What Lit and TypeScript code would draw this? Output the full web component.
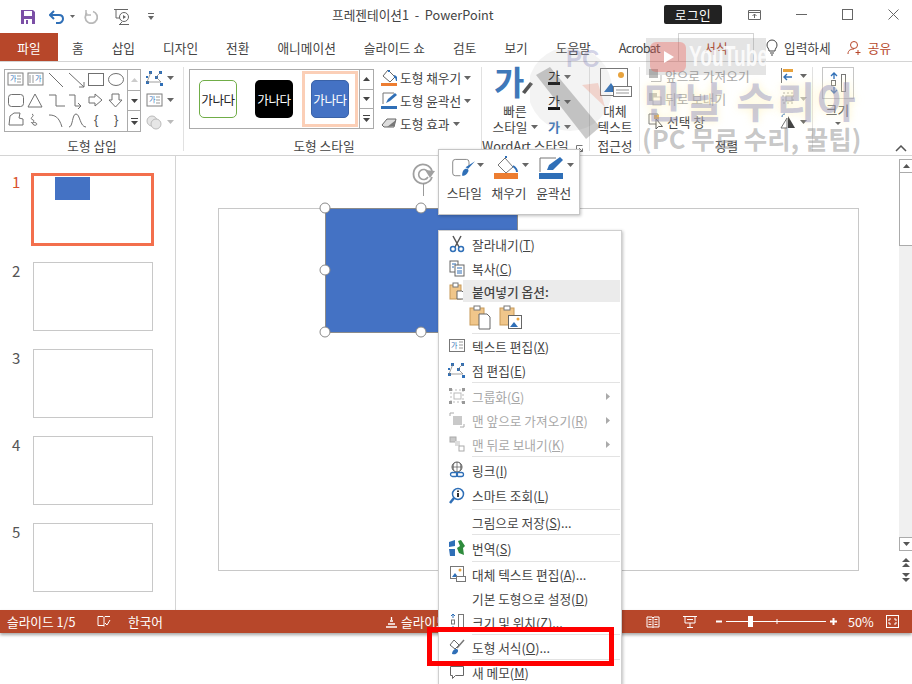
import { LitElement, html, css, svg } from "lit";
import { customElement } from "lit/decorators.js";

const caret = (c = "#666") => html`<svg class="caret" width="7" height="4" viewBox="0 0 7 4"><path d="M0 0h7L3.500 4z" fill="${c}"/></svg>`;
const ga = (x: number, y: number, w = 15, h = 12, vertical = false) => svg`
  <rect x="${x}" y="${y}" width="${w}" height="${h}" fill="#fff" stroke="#7f7f7f"/>
  <text x="${vertical ? x + 7 : x + 2}" y="${y + 8}" font-size="7" fill="#2f6fb7" stroke="none" font-family="Noto Sans CJK KR">가</text>
  ${vertical ? svg`<path d="M${x + 2} ${y + 2}v8M${x + 5} ${y + 2}v8" stroke="#999"/>` : svg`<path d="M${x + 9} ${y + 3}h4M${x + 9} ${y + 6}h4M${x + 9} ${y + 9}h4" stroke="#999"/>`}`;

const galleryShapes = svg`<svg width="122" height="60" viewBox="0 0 122 60" fill="none" stroke="#707070" stroke-width="1">
  ${ga(3, 3)}${ga(23, 3, 15, 12, true)}
  <path d="M44 3l14 14M64 3l15 14M79 17v-5M79 17h-5"/>
  <rect x="83.500" y="3.500" width="15" height="12"/><ellipse cx="111" cy="9.500" rx="7.500" ry="6"/>
  <rect x="3.500" y="24.500" width="15" height="12" rx="3"/><path d="M30 24l7 13H23z"/>
  <path d="M44 25h7v11h9M64 25h6v11h6M76 36l-3-3M76 36l-3 3"/><path d="M84 27h6v-3l7 6-7 6v-3h-6z"/><path d="M107 24h7v6h3l-6.500 7-6.500-7h3z"/>
  <path d="M5 46l4-3h6l-1 5 4 1v6H4zM27 44c4 2-4 4 1 6 3 1-3 3 1 5 2 1 4-1 2-2-3-2-3 2-5-1M44 45c6 0 10 2 13 12M64 57c4 0 3-13 7-13s4 13 10 13" />
  <text x="89" y="54" font-size="13" fill="#555" stroke="none" font-family="Liberation Sans">{</text><text x="109" y="54" font-size="13" fill="#555" stroke="none" font-family="Liberation Sans">}</text>
</svg>`;

const nodes = (x: number, y: number) => svg`<g fill="#2f6fb7"><rect x="${x + 3}" y="${y}" width="3" height="3"/><rect x="${x + 13}" y="${y}" width="3" height="3"/><rect x="${x}" y="${y + 10}" width="3" height="3"/><rect x="${x + 14}" y="${y + 12}" width="3" height="3"/><rect x="${x}" y="${y + 5}" width="2" height="2"/><rect x="${x + 9}" y="${y + 5}" width="3" height="3"/></g><path d="M${x + 5} ${y + 1}l-4 10h14l-5-5 5-5" fill="none" stroke="#777" stroke-width=".7"/>`;

const fillIco = svg`<path d="M7 1l7 7-5 5-7-6z" fill="#fff" stroke="#666"/><path d="M8 3V1M13 7c3 1 3 3 3 5" stroke="#2f6fb7" stroke-width="2" fill="none"/><rect x="0" y="14" width="16" height="3" fill="#ed7d31"/>`;
const lineIco = svg`<path d="M2 12V1h11" fill="none" stroke="#777"/><path d="M5 11l2-4 7-6 2 2-7 6z" fill="#2f6fb7"/><rect x="0" y="14" width="16" height="3" fill="#2f6fb7"/>`;
const clip = (x: number) => svg`<rect x="${x}" y="3" width="14" height="17" fill="#f0c68a" stroke="#c89a58"/><rect x="${x + 4}" y="1" width="6" height="4" fill="#fff" stroke="#777"/>`;

type Row = { t?: any; ic?: any; dis?: boolean; sub?: boolean; split?: boolean; sep?: boolean; gap?: boolean; cls?: string; h?: number };
const s = (...p: any[]) => html`<svg width="18" height="18" viewBox="0 0 18 18">${p}</svg>`;
const icons = {
  cut: s(svg`<path d="M5 1l6 11M13 1L7 12" stroke="#555" stroke-width="1.500" fill="none"/><circle cx="5" cy="14" r="2.500" fill="none" stroke="#2f6fb7" stroke-width="1.500"/><circle cx="13" cy="14" r="2.500" fill="none" stroke="#2f6fb7" stroke-width="1.500"/>`),
  copy: s(svg`<rect x="2" y="2" width="8" height="11" fill="#fff" stroke="#666"/><rect x="7" y="6" width="9" height="11" fill="#fff" stroke="#666"/><path d="M4 5h4M4 8h2M9 9h5M9 12h5M9 14h5" stroke="#2f6fb7"/>`),
  paste: s(svg`<rect x="2" y="3" width="11" height="14" fill="#f0c68a" stroke="#c89a58"/><rect x="5" y="1" width="5" height="4" fill="#fff" stroke="#777"/><path d="M9 9h5l2 2v6H9z" fill="#fff" stroke="#666"/>`),
  text: s(svg`<rect x="1.500" y="2.500" width="15" height="12" fill="#fff" stroke="#777"/><text x="3" y="11" font-size="7" fill="#2f6fb7" font-family="Noto Sans CJK KR">가</text><path d="M11 5h4M11 8h4M11 11h4" stroke="#999"/>`),
  point: s(nodes(0, 2)),
  group: s(svg`<path d="M3 3h12v12H3z" fill="none" stroke="#bbb" stroke-dasharray="2 2"/><rect x="1" y="1" width="3" height="3" fill="#999"/><rect x="14" y="1" width="3" height="3" fill="#999"/><rect x="1" y="14" width="3" height="3" fill="#999"/><rect x="14" y="14" width="3" height="3" fill="#999"/><rect x="6" y="6" width="7" height="6" fill="none" stroke="#bbb"/>`),
  front: s(svg`<path d="M2 5V2h4M16 13v3h-4" fill="none" stroke="#aaa"/><rect x="5" y="5" width="9" height="9" fill="#c9c9c9"/>`),
  back: s(svg`<rect x="2" y="2" width="6" height="5" fill="#c9c9c9" stroke="#aaa"/><rect x="7" y="6" width="5" height="5" fill="#ddd"/><rect x="11" y="11" width="5" height="5" fill="#fff" stroke="#aaa"/>`),
  link: s(svg`<circle cx="9" cy="6" r="5" fill="none" stroke="#555"/><path d="M4 6h10M9 1v10M6 2c-1 3-1 5 0 8M12 2c1 3 1 5 0 8" stroke="#555" fill="none" stroke-width=".7"/><rect x="2.500" y="11.500" width="7" height="4" rx="2" fill="#fff" stroke="#2f6fb7" stroke-width="1.300"/><rect x="8.500" y="11.500" width="7" height="4" rx="2" fill="none" stroke="#2f6fb7" stroke-width="1.300"/>`),
  smart: s(svg`<circle cx="10" cy="7" r="5.500" fill="#fff" stroke="#2f6fb7" stroke-width="1.500"/><path d="M6 11l-4 5" stroke="#2f6fb7" stroke-width="2.500"/><rect x="9" y="6" width="2" height="4" fill="#333"/><rect x="9" y="3.500" width="2" height="1.500" fill="#333"/>`),
  trans: s(svg`<path d="M1 3l6-2v6l-6 1zM1 10h6v7H2z" fill="#2f6fb7"/><path d="M10 2l3-1 4 6-2 2 1 7-5-2-2-5 3-2z" fill="#2e8b3c"/>`),
  alt: s(svg`<rect x="2.500" y="1.500" width="13" height="12" fill="#fff" stroke="#777"/><path d="M4 12l3-4 3 4z" fill="#2f6fb7"/><circle cx="12" cy="5" r="1.500" fill="#e8a33d"/><rect x="8.500" y="11.500" width="9" height="5" fill="#fff" stroke="#777"/>`),
  size: s(svg`<path d="M5 1v4M3 3l2-2 2 2M5 17v-4M3 15l2 2 2-2" stroke="#2f6fb7" fill="none"/><rect x="3.500" y="7" width="3" height="4" fill="none" stroke="#777"/><rect x="10.500" y="1.500" width="5" height="15" fill="#fff" stroke="#777"/>`),
  fmt: s(svg`<path d="M2 7l4-5 5 5-4 4z" fill="#fff" stroke="#666"/><path d="M16 2l-7 8" stroke="#777" stroke-width="1.500"/><path d="M4 16c0-3 2-5 4-5s3 2 1 4-3 1-5 1z" fill="#2f6fb7"/>`),
  memo: s(svg`<path d="M2.500 3.500h13v9h-8l-3 3v-3h-2z" fill="#fff" stroke="#666"/>`),
};

const rows: Row[] = [
  { ic: icons.cut, t: html`잘라내기(<u>T</u>)` },
  { ic: icons.copy, t: html`복사(<u>C</u>)` },
  { ic: icons.paste, t: html`<b>붙여넣기 옵션:</b>`, cls: "hd", h: 22 },
  { cls: "pastes", h: 31 },
  { sep: true },
  { ic: icons.text, t: html`텍스트 편집(<u>X</u>)` },
  { ic: icons.point, t: html`점 편집(<u>E</u>)` },
  { sep: true, gap: true },
  { ic: icons.group, t: html`그룹화(<u>G</u>)`, dis: true, sub: true },
  { ic: icons.front, t: html`맨 앞으로 가져오기(<u>R</u>)`, dis: true, sub: true, split: true },
  { ic: icons.back, t: html`맨 뒤로 보내기(<u>K</u>)`, dis: true, sub: true, split: true },
  { sep: true, gap: true },
  { ic: icons.link, t: html`링크(<u>I</u>)` },
  { ic: icons.smart, t: html`스마트 조회(<u>L</u>)`, h: 27 },
  { sep: true },
  { t: html`그림으로 저장(<u>S</u>)...` },
  { sep: true },
  { ic: icons.trans, t: html`번역(<u>S</u>)`, h: 26 },
  { sep: true },
  { ic: icons.alt, t: html`대체 텍스트 편집(<u>A</u>)...` },
  { t: html`기본 도형으로 설정(<u>D</u>)` },
  { ic: icons.size, t: html`크기 및 위치(<u>Z</u>)...` },
  { sep: true },
  { ic: icons.fmt, t: html`도형 서식(<u>O</u>)...` },
  { sep: true },
  { ic: icons.memo, t: html`새 메모(<u>M</u>)` },
];

const upTri = (c = "#444") => html`<svg width="7" height="4" viewBox="0 0 7 4"><path d="M0 4h7L3.500 0z" fill="${c}"/></svg>`;
const dnTri = (c = "#444") => html`<svg width="7" height="4" viewBox="0 0 7 4"><path d="M0 0h7L3.500 4z" fill="${c}"/></svg>`;
const moreTri = html`<svg width="7" height="7" viewBox="0 0 7 7"><path d="M0 0h7v1H0zM0 3h7L3.500 7z" fill="#444"/></svg>`;

@customElement("app-root")
export class AppRoot extends LitElement {
  static styles = css`
    :host { display: block; position: relative; width: 912px; height: 684px; overflow: hidden; background: #fff; color: #444; font: 12.700px "Noto Sans CJK KR", "Noto Sans", sans-serif; }
    svg { display: block; flex: none; }
    .titlebar { height: 33px; display: grid; grid-template-columns: 332px auto 1fr; align-items: center; background: #fff; }
    .qat { display: flex; align-items: center; padding-left: 20px; height: 30px; }
    .qat .m1 { margin-left: 13px; } .qat .m2 { margin-left: 5px; } .qat .m3 { margin-left: 9px; } .qat .m4 { margin-left: 15px; }
    .title { white-space: nowrap; margin-top: -4px; }
    .winbtns { display: flex; align-items: center; justify-content: flex-end; height: 28px; margin-top: -4px; }
    .login { width: 58px; height: 19px; background: #222; color: #fff; border-radius: 2px; display: flex; align-items: center; justify-content: center; margin-right: 26px; letter-spacing: .5px; }
    .winbtns svg { margin-right: 35px; }
    .winbtns svg:last-child { margin-right: 13px; }
    .tabs { height: 29px; display: flex; align-items: stretch; border-bottom: 1px solid #d4d4d4; box-sizing: border-box; }
    .tabl { width: 678px; flex: none; display: flex; align-items: stretch; }
    .tab { padding: 0 14px; display: flex; align-items: center; white-space: nowrap; }
    .tab.file { width: 58px; box-sizing: border-box; padding: 0; justify-content: center; background: #b7472a; color: #fff; }
    .tab.lat { letter-spacing: -.7px; padding: 0 0 0 14px; }
    .tab.fmt { width: 76px; box-sizing: border-box; padding: 0; justify-content: center; color: #b7472a; border: 1px solid #d4d4d4; border-bottom: 0; }
    .tab.tell { padding: 0 0 0 11px; gap: 5px; }
    .tab.share { padding: 0; margin-left: 16px; gap: 5px; color: #b7472a; }
    .ribbon { height: 94px; display: flex; border-bottom: 1px solid #d4d4d4; box-sizing: border-box; position: relative; }
    .grp { display: grid; grid-template-rows: 76px 17px; box-sizing: border-box; position: relative; }
    .grp::after { content: ""; position: absolute; right: 0; top: 5px; bottom: 4px; width: 1px; background: #e1e1e1; }
    .body { display: flex; min-height: 0; }
    .lbl { text-align: center; line-height: 16px; position: relative; white-space: nowrap; }
    .g-ins { width: 184px; } .g-sty { width: 298px; } .g-wa { width: 108px; } .g-acc { width: 50px; } .g-arr { width: 173px; } .g-sz { width: 43px; }
    .g-sz::after { display: none; }
    .g-ins .body { padding: 7px 0 0 4px; gap: 5px; }
    .g-sty .body { padding: 7px 0 0 5px; gap: 7px; }
    .g-sty .lbl { padding-right: 18px; }
    .g-wa .body { padding: 4px 0 0 12px; gap: 12px; }
    .g-wa .lbl { padding-right: 22px; }
    .launcher { position: absolute; right: 8px; top: 7px; }
    .g-acc .body { padding: 6px 0 0; flex-direction: column; align-items: center; }
    .g-acc svg { margin-left: 2px; }
    .g-arr .body { padding: 2px 0 0 8px; }
    .g-sz .body { padding: 5px 0 0 6px; flex-direction: column; align-items: center; }
    .gal { display: flex; border: 1px solid #ababab; background: #fff; box-sizing: border-box; }
    .gal.shapes { width: 137px; height: 63px; }
    .gal.stylegal { width: 185px; height: 60px; }
    .bar { display: flex; flex-direction: column; width: 13px; border-left: 1px solid #ababab; flex: none; }
    .bar div { flex: 1; display: flex; align-items: center; justify-content: center; border-bottom: 1px solid #ababab; }
    .bar div:last-child { border-bottom: 0; }
    .col { display: flex; flex-direction: column; }
    .tools { gap: 6px; padding-top: 1px; }
    .sty3 { margin-top: -3px; height: 72px; }
    .mini { display: flex; align-items: center; gap: 4px; }
    .mini.tall { height: 23px; }
    .wa-col { gap: 2px; }
    .wa1 { border-bottom: 3px solid #000; line-height: 13px; font-size: 13px; color: #222; }
    .wa2 { color: #3f78b9; line-height: 13px; font-size: 13px; font-weight: 700; }
    .quick { align-items: center; width: 42px; }
    .big { text-align: center; line-height: 16px; white-space: nowrap; }
    .quick .big { margin-top: 1px; display: flex; flex-direction: column; align-items: center; }
    .quick .big span { display: flex; align-items: center; gap: 3px; }
    .g-acc .big { margin-top: 3px; }
    .thumb { width: 38px; height: 38px; border-radius: 5px; box-sizing: border-box; display: flex; align-items: center; justify-content: center; font-size: 12.500px; white-space: nowrap; letter-spacing: -.3px; }
    .thumb.t1 { border: 1.500px solid #70ad47; color: #222; }
    .thumb.t2 { background: #000; color: #fff; }
    .thumb.t3 { background: #4472c4; color: #fff; border: 1px solid #3a62a8; }
    .styles { display: flex; align-items: center; width: 170px; padding-left: 9px; gap: 18px; box-sizing: border-box; }
    .hl { width: 56px; height: 56px; border: 3px solid #fbcfb7; box-sizing: border-box; display: flex; align-items: center; justify-content: center; margin: 0 -9px; }
    .line { display: flex; align-items: center; gap: 3px; height: 23px; white-space: nowrap; }
    .arr-txt { width: 112px; color: #a9a9a9; }
    .line.on { color: #444; }
    .arr-ic { margin-left: 20px; width: 30px; }
    .szbox { width: 30px; height: 30px; border: 1px solid #c6c6c6; display: flex; align-items: center; justify-content: center; flex: none; }
    .g-sz .big { margin-top: 3px; }
    .g-sz .dn { margin-top: 4px; }
    .chev { position: absolute; left: 895px; top: 83px; }
    .status { height: 23px; background: #b7472a; color: #fff; display: flex; align-items: center; box-shadow: 0 2px 3px rgba(0,0,0,.35); position: relative; }
    .status span { white-space: nowrap; }
    .st1 { margin-left: 7px; width: 90px; }
    .st2 { margin-left: 17px; width: 257px; }
    .st3 { margin-left: 3px; width: 245px; }
    .st4 { margin-left: 23px; }
    .st5 { margin-left: 17px; }
    .st6 { margin-left: 10px; width: 38px; }
    .main { height: 454px; display: flex; }
    .thumbs { width: 176px; box-sizing: border-box; border-right: 1px solid #d4d4d4; padding: 17px 0 0 12px; display: flex; flex-direction: column; gap: 18px; flex: none; }
    .t { display: flex; gap: 11px; height: 69px; font-size: 15px; line-height: 13px; color: #555; padding-top: 2px; box-sizing: border-box; }
    .t i { display: block; width: 120px; height: 69px; border: 1px solid #c8c8c8; box-sizing: border-box; margin: -2px 0 0 2px; background: #fff; flex: none; }
    .t.on { height: 71px; color: #d9512c; }
    .t.on i { width: 123px; height: 73px; border: 3px solid #f36f4d; margin: -2px 0 0; padding: 1px 0 0 21px; }
    .t.on i b { display: block; width: 35px; height: 23px; background: #4472c4; }
    .canvas { flex: 1; padding: 52px 40px 0 42px; box-sizing: border-box; position: relative; background: #fff; }
    .slide { width: 641px; height: 363px; border: 1px solid #c8c8c8; box-sizing: border-box; background: #fff; }
    .vs { width: 13px; flex: none; padding-top: 3px; box-sizing: border-box; display: flex; flex-direction: column; background: #fff; }
    .vs .up, .vs .dn { height: 14px; box-sizing: border-box; border: 1px solid #ababab; display: flex; align-items: center; justify-content: center; flex: none; border-right: 0; }
    .vs .th { height: 73px; border: 1px solid #ababab; border-top: 0; border-right: 0; box-sizing: border-box; flex: none; }
    .vs .tr { height: 291px; background: #f0f0f0; flex: none; }
    .vs .nav { height: 15px; display: flex; align-items: center; justify-content: center; flex: none; }
    .vs .nav1 { margin-top: 4px; }
    .shape { position: absolute; left: 149px; top: 52px; width: 193px; height: 125px; background: #4472c4; border: 1px solid #8b8b8b; box-sizing: border-box; }
    .h { position: absolute; width: 11px; height: 11px; box-sizing: border-box; border: 1.500px solid #8a8a8a; border-radius: 50%; background: #fff; transform: translate(-50%, -50%); }
    .rot { position: absolute; left: 236px; top: 6px; }
    .pop { position: absolute; left: 438px; top: 149px; width: 142px; height: 66px; box-sizing: border-box; background: #fff; border: 1px solid #c6c6c6; box-shadow: 1px 1px 3px rgba(0,0,0,.25); display: grid; grid-template-columns: repeat(3, 1fr); padding: 6px 3px 0; text-align: center; }
    .pop .pi { display: flex; flex-direction: column; align-items: center; gap: 3px; white-space: nowrap; }
    .pop .ir { display: flex; align-items: flex-start; gap: 2px; height: 24px; padding-left: 6px; }
    .pop .ir .caret { margin-top: 7px; }
    .menu { position: absolute; left: 438px; top: 230px; width: 184px; box-sizing: border-box; background: #fff; border: 1px solid #cfcfcf; box-shadow: 1px 1px 3px rgba(0,0,0,.25); padding: 1px 1px 0 0; }
    .row { display: grid; grid-template-columns: 33px 1fr 22px; align-items: center; height: 24px; white-space: nowrap; }
    .row .ic { display: flex; justify-content: center; padding-left: 2px; }
    .row .tx { grid-column: 2; }
    .row .tx u { text-underline-offset: 1px; }
    .row.dis { color: #a8a8a8; }
    .row .ar { display: flex; align-items: center; justify-content: flex-end; gap: 5px; grid-column: 3; }
    .row .ar svg { margin-right: 10px; }
    .row .ar i { display: block; width: 1px; height: 12px; background: #d6d6d6; margin-right: 3px; }
    .row.hd .tx { background: #ebebeb; height: 100%; display: flex; align-items: center; padding-left: 9px; margin-left: -9px; grid-column: 2 / 4; }
    .row.hd .tx b { color: #444; font-weight: 500; }
    .row.pastes { padding-left: 30px; display: flex; gap: 6px; }
    .sep { height: 1px; background: #e3e3e3; margin-left: 33px; }
    .sep.gap { margin-bottom: 1px; }
    .red { position: absolute; left: 427px; top: 627px; width: 187px; height: 39px; box-sizing: border-box; border: 5px solid #ff0000; }
    .wm { position: absolute; left: 530px; top: 35px; width: 340px; height: 125px; pointer-events: none; }
    .wm .big1 { position: absolute; left: 114px; top: 40px; font-size: 42px; line-height: 50px; font-weight: 700; color: rgba(130,130,185,.42); white-space: nowrap; letter-spacing: 1.800px; text-shadow: 0 0 8px rgba(255,240,170,.6); }
    .wm .big2 { position: absolute; left: 112px; top: 88px; font-size: 25.500px; line-height: 30px; font-weight: 700; color: rgba(130,130,130,.45); white-space: nowrap; }
    .wm .yt { position: absolute; left: 116px; top: 3px; width: 120px; height: 37px; background: rgba(120,120,120,.2); display: flex; align-items: center; gap: 3px; padding-left: 4px; box-sizing: border-box; color: rgba(255,255,255,.85); font: 700 29px "Liberation Sans", sans-serif; overflow: hidden; white-space: nowrap; }
    .wm .yt span { display: block; transform: scaleX(.66); transform-origin: left center; }
    .wm .circ { position: absolute; left: 0; top: 2px; }
  `;

  private renderTitle() {
    return html`<div class="titlebar">
      <div class="qat">
        <svg width="16" height="16" viewBox="0 0 16 16"><path d="M1 1h12l2 2v12H1z" fill="#7b4fa6"/><rect x="4" y="2" width="8" height="5" fill="#fff"/><rect x="4" y="10" width="8" height="5" fill="#fff"/><rect x="6" y="11" width="2" height="4" fill="#7b4fa6"/></svg>
        <svg class="m1" width="16" height="14" viewBox="0 0 16 14" fill="none"><path d="M5 1L1 5l4 4M1 5h9c3 0 4 2 4 4s-2 4-4 4H7" stroke="#2f6fb7" stroke-width="2"/></svg>
        <svg class="m2" width="5" height="3" viewBox="0 0 5 3"><path d="M0 0h5L2.500 3z" fill="#666"/></svg>
        <svg class="m3" width="14" height="14" viewBox="0 0 14 14" fill="none"><path d="M9 1.500A6 6 0 1 1 3 3" stroke="#b8b8b8" stroke-width="1.800"/><path d="M2 0v5h5" stroke="#b8b8b8" stroke-width="1.500"/></svg>
        <svg class="m4" width="20" height="18" viewBox="0 0 20 18" fill="none"><path d="M1 1.500h14M3 2v8h4" stroke="#666"/><circle cx="11" cy="9" r="4.500" stroke="#666"/><path d="M10 7l3 2-3 2z" fill="#666"/><path d="M6 16.500h10M9 14l-2 2" stroke="#666"/></svg>
        <svg class="m4" width="6" height="7" viewBox="0 0 6 7"><path d="M0 0h6v1H0zM0 3h6L3 7z" fill="#666"/></svg>
      </div>
      <div class="title">프레젠테이션1&nbsp; - &nbsp;PowerPoint</div>
      <div class="winbtns">
        <div class="login">로그인</div>
        <svg width="13" height="10" viewBox="0 0 13 10" fill="none"><path d="M.5.500h12v9H.5zM.5 2.500h12M6.500 8V4M4.500 6l2-2 2 2" stroke="#666"/></svg>
        <svg width="11" height="11" viewBox="0 0 11 11"><path d="M0 5.500h11" stroke="#666"/></svg>
        <svg width="11" height="11" viewBox="0 0 11 11"><rect x=".5" y=".5" width="10" height="10" fill="none" stroke="#666"/></svg>
        <svg width="11" height="11" viewBox="0 0 11 11"><path d="M.5.500l10 10M10.500.500l-10 10" stroke="#666"/></svg>
      </div>
    </div>`;
  }

  private renderTabs() {
    return html`<div class="tabs">
      <div class="tabl">
        <div class="tab file">파일</div>
        ${["홈", "삽입", "디자인", "전환", "애니메이션", "슬라이드 쇼", "검토", "보기", "도움말"].map((t) => html`<div class="tab">${t}</div>`)}
        <div class="tab lat">Acrobat</div>
      </div>
      <div class="tab fmt">서식</div>
      <div class="tab tell"><svg width="14" height="17" viewBox="0 0 14 17" fill="none"><path d="M4 12c0-3-2-3-2-6a5 5 0 0 1 10 0c0 3-2 3-2 6zM5 14h4M6 16h2" stroke="#444"/></svg>입력하세</div>
      <div class="tab share"><svg width="16" height="15" viewBox="0 0 16 15" fill="none"><circle cx="7" cy="5" r="3.500" stroke="#b7472a"/><path d="M1 14c0-4 3-5 6-5M11 10v5M8.500 12.500h5" stroke="#b7472a"/></svg>공유</div>
    </div>`;
  }

  private renderRibbon() {
    return html`<div class="ribbon">
      <div class="grp g-ins">
        <div class="body">
          <div class="gal shapes">
            ${galleryShapes}
            <div class="bar"><div>${upTri("#ccc")}</div><div>${dnTri()}</div><div>${moreTri}</div></div>
          </div>
          <div class="col tools">
            <div class="mini"><svg width="17" height="16" viewBox="0 0 17 16">${nodes(0, 1)}</svg>${caret()}</div>
            <div class="mini"><svg width="17" height="16" viewBox="0 0 17 16">${ga(1, 2)}</svg>${caret()}</div>
            <div class="mini"><svg width="17" height="16" viewBox="0 0 17 16" fill="#e6e6e6" stroke="#bbb"><circle cx="6" cy="7" r="5"/><circle cx="10" cy="10" r="5"/></svg>${caret("#bbb")}</div>
          </div>
        </div>
        <div class="lbl">도형 삽입</div>
      </div>
      <div class="grp g-sty">
        <div class="body">
          <div class="gal stylegal">
            <div class="styles">
              <div class="thumb t1">가나다</div>
              <div class="thumb t2">가나다</div>
              <div class="hl"><div class="thumb t3">가나다</div></div>
            </div>
            <div class="bar"><div>${upTri()}</div><div>${dnTri()}</div><div>${moreTri}</div></div>
          </div>
          <div class="col sty3">
            <div class="line"><svg width="16" height="17" viewBox="0 0 16 17">${fillIco}</svg>도형 채우기 ${caret()}</div>
            <div class="line"><svg width="16" height="17" viewBox="0 0 16 17">${lineIco}</svg>도형 윤곽선 ${caret()}</div>
            <div class="line"><svg width="16" height="17" viewBox="0 0 16 17"><path d="M1 10l5-6h9l-2 8H3z" fill="#ddd" stroke="#666"/><path d="M6 12l7-1 2-6" fill="#777"/></svg>도형 효과 ${caret()}</div>
          </div>
        </div>
        <div class="lbl">도형 스타일</div>
      </div>
      <div class="grp g-wa">
        <div class="body">
          <div class="col quick">
            <svg width="40" height="36" viewBox="0 0 40 36"><text x="-1" y="29" font-size="33" font-weight="700" fill="#3f78b9" font-family="Noto Sans CJK KR">가</text><path d="M27 26l8-10 3 2-8 10z" fill="#555"/></svg>
            <div class="big"><div>빠른</div><span>스타일${caret()}</span></div>
          </div>
          <div class="col wa-col">
            <div class="mini tall"><span class="wa1">가</span>${caret()}</div>
            <div class="mini tall"><span class="wa1">가</span>${caret()}</div>
            <div class="mini tall"><span class="wa2">가</span>${caret()}</div>
          </div>
        </div>
        <div class="lbl">WordArt 스타일<svg class="launcher" width="7" height="7" viewBox="0 0 7 7" fill="none"><path d="M.5 6.500V.5h6M3 3l3.500 3.500M6.500 3.500v3h-3" stroke="#777"/></svg></div>
      </div>
      <div class="grp g-acc">
        <div class="body">
          <svg width="32" height="32" viewBox="0 0 32 32"><rect x=".5" y=".5" width="27" height="27" fill="#fff" stroke="#777"/><circle cx="21" cy="7" r="3" fill="#e8a33d"/><path d="M4 24l7-9 6 9zM14 24l5-5 4 5z" fill="#2f6fb7"/><rect x="13.500" y="18.500" width="18" height="10" fill="#fff" stroke="#777"/><path d="M16 22h13M16 25h13" stroke="#999"/></svg>
          <div class="big">대체<br>텍스트</div>
        </div>
        <div class="lbl">접근성</div>
      </div>
      <div class="grp g-arr">
        <div class="body">
          <div class="col arr-txt">
            <div class="line"><svg width="14" height="15" viewBox="0 0 14 15"><rect x="1" y="1" width="9" height="9" fill="#bbb"/><path d="M3 13.500h10V7" fill="none" stroke="#bbb"/></svg>앞으로 가져오기</div>
            <div class="line"><svg width="14" height="15" viewBox="0 0 14 15"><rect x="1" y="2" width="8" height="8" fill="#bbb"/><rect x="5" y="6" width="8" height="8" fill="#fff" stroke="#bbb"/></svg>뒤로 보내기</div>
            <div class="line on"><svg width="16" height="17" viewBox="0 0 16 17"><path d="M1 1h9v10H1z" fill="none" stroke="#777"/><rect x="6" y="2" width="5" height="4" fill="#e8a33d"/><path d="M8 6v10l2.500-2.500h4z" fill="#fff" stroke="#555"/></svg>선택 창</div>
          </div>
          <div class="col arr-ic">
            <div class="mini tall"><svg width="16" height="17" viewBox="0 0 16 17"><path d="M1.500 1v15" stroke="#777"/><rect x="3" y="2" width="10" height="3" fill="#e8a33d"/><path d="M12 10H4M7 7l-3 3 3 3" stroke="#2f6fb7" fill="none" stroke-width="1.400"/></svg>${caret()}</div>
            <div class="mini tall"><svg width="16" height="17" viewBox="0 0 16 17"><path d="M3 3h10v10H3z" fill="none" stroke="#aaa" stroke-dasharray="2 2"/><rect x="6" y="6" width="6" height="5" fill="none" stroke="#aaa"/></svg>${caret("#aaa")}</div>
            <div class="mini tall"><svg width="16" height="17" viewBox="0 0 16 17"><path d="M8 3l7 12H8z" fill="#444"/><path d="M7 5L1 15h6z" fill="#fff" stroke="#777"/><path d="M5 1c-2 0-3 1-3 3" stroke="#2f6fb7" fill="none"/></svg>${caret()}</div>
          </div>
        </div>
        <div class="lbl">정렬</div>
      </div>
      <div class="grp g-sz">
        <div class="body">
          <div class="szbox"><svg width="20" height="22" viewBox="0 0 20 22" fill="none"><path d="M6 1v6M3 4l3-3 3 3M6 21v-6M3 18l3 3 3-3" stroke="#2f6fb7" stroke-width="1.300"/><rect x="3.500" y="8.500" width="4" height="5" stroke="#777"/><rect x="13.500" y="2.500" width="4" height="17" stroke="#777"/></svg></div>
          <div class="big">크기</div>
          <svg class="dn" width="6" height="3" viewBox="0 0 6 3"><path d="M0 0h6L3 3z" fill="#666"/></svg>
        </div>
        <div class="lbl"></div>
      </div>
      <svg class="chev" width="12" height="7" viewBox="0 0 12 7" fill="none"><path d="M1 6l5-5 5 5" stroke="#555" stroke-width="1.500"/></svg>
    </div>`;
  }

  private renderMain() {
    return html`<div class="main">
      <div class="thumbs">
        <div class="t on">1<i><b></b></i></div>
        ${[2, 3, 4, 5].map((n) => html`<div class="t">${n}<i></i></div>`)}
      </div>
      <div class="canvas">
        <div class="slide"></div>
        <div class="shape"></div>
        <svg class="rot" width="24" height="34" viewBox="0 0 24 34" fill="none"><path d="M20 9A9.500 9.500 0 1 0 20 15" stroke="#a0a0a0" stroke-width="1.800"/><path d="M16 10a5 5 0 1 0 0 5" stroke="#a0a0a0" stroke-width="1.600"/><path d="M13 8l10 1-5 7z" fill="#a0a0a0"/><path d="M11.500 21v13" stroke="#9a9a9a"/></svg>
        ${[[149, 52], [245, 52], [149, 114], [149, 176], [245, 176]].map(([x, y]) => html`<div class="h" style="left:${x}px;top:${y}px"></div>`)}
      </div>
      <div class="vs">
        <div class="up">${upTri("#555")}</div>
        <div class="th"></div>
        <div class="tr"></div>
        <div class="dn">${dnTri("#555")}</div>
        <div class="nav nav1"><svg width="8" height="9" viewBox="0 0 8 9"><path d="M0 4h8L4 0zM0 9h8L4 5z" fill="#555"/></svg></div>
        <div class="nav"><svg width="8" height="9" viewBox="0 0 8 9"><path d="M0 0h8L4 4zM0 5h8L4 9z" fill="#555"/></svg></div>
      </div>
    </div>`;
  }

  private renderStatus() {
    return html`<div class="status">
      <span class="st1">슬라이드 1/5</span>
      <svg width="14" height="13" viewBox="0 0 14 13" fill="none"><path d="M1 1.500h5l1 1 1-1h5M1 1.500v9h6v1M7 2.500v8" stroke="#fff"/><path d="M8 8l2 2 3-5" stroke="#fff"/></svg>
      <span class="st2">한국어</span>
      <svg width="13" height="12" viewBox="0 0 13 12" fill="none"><path d="M1 11h11M3 8h7M5 5h3M6.500 1v3" stroke="#fff" stroke-width="1.300"/></svg>
      <span class="st3">슬라이드 노트</span>
      <svg width="14" height="12" viewBox="0 0 14 12" fill="none"><path d="M1 1h5l1 1 1-1h5v10H8l-1 .5L6 11H1zM7 2v9M2.500 3.500h3M2.500 6h3M2.500 8.500h3M8.500 3.500h3M8.500 6h3M8.500 8.500h3" stroke="#fff"/></svg>
      <svg class="st4" width="14" height="13" viewBox="0 0 14 13" fill="none"><path d="M0 1.500h14M2 2v6h10V2M7 8v4M4 12.500h6M4 4.500h6" stroke="#fff"/></svg>
      <svg class="st5" width="124" height="11" viewBox="0 0 124 11"><rect x="2" y="4.500" width="6" height="2" fill="#fff"/><path d="M12 5.500h100M63 3v5" stroke="#fff"/><rect x="34" y="0" width="5" height="11" fill="#fff"/><path d="M116 5.500h7M119.500 2v7" stroke="#fff" stroke-width="2"/></svg>
      <span class="st6">50%</span>
      <svg width="13" height="13" viewBox="0 0 13 13" fill="none"><rect x=".5" y=".5" width="12" height="12" stroke="#fff"/><path d="M4 3v2H2M9 3v2h2M4 10V8H2M9 10V8h2" stroke="#fff"/></svg>
    </div>`;
  }

  private renderPopup() {
    return html`<div class="pop">
      <div class="pi"><div class="ir"><svg width="24" height="24" viewBox="0 0 28 24" fill="none"><path d="M11 21H5a3 3 0 0 1-3-3V5a3 3 0 0 1 3-3h13a3 3 0 0 1 3 3v5" stroke="#777"/><path d="M28 4l-8 9-3-2zM13 21c0-5 2-8 5-8s3 3 1 5-3 3-6 3z" fill="#2f6fb7"/></svg>${caret()}</div>스타일</div>
      <div class="pi"><div class="ir"><svg width="26" height="24" viewBox="0 0 26 24" fill="none"><path d="M11 2l8 9-7 6-8-8z" fill="#fff" stroke="#777"/><path d="M12 2V0M19 10c3 2 4 3 4 6" stroke="#2f6fb7" stroke-width="2"/><rect x="0" y="17" width="24" height="6" fill="#ed7d31"/></svg>${caret()}</div>채우기</div>
      <div class="pi"><div class="ir"><svg width="26" height="24" viewBox="0 0 26 24" fill="none"><path d="M1 16V2h16" stroke="#777"/><path d="M8 14l2-5 11-8 3 3-10 10z" fill="#2f6fb7"/><rect x="0" y="17" width="24" height="6" fill="#2f6fb7"/></svg>${caret()}</div>윤곽선</div>
    </div>`;
  }

  private renderMenu() {
    return html`<div class="menu">
      ${rows.map((r) => {
        if (r.sep) return html`<div class="sep ${r.gap ? "gap" : ""}"></div>`;
        if (r.cls === "pastes")
          return html`<div class="row pastes" style="height:${r.h}px">
            <svg width="24" height="26" viewBox="0 0 24 26">${clip(1)}<path d="M10 9h8l3 3v12H10z" fill="#fff" stroke="#666"/></svg>
            <svg width="24" height="26" viewBox="0 0 24 26">${clip(1)}<rect x="9.500" y="10.500" width="13" height="13" fill="#fff" stroke="#666"/><path d="M11 22l4-5 4 5z" fill="#2f6fb7"/><circle cx="19" cy="14" r="1.500" fill="#e8a33d"/></svg>
          </div>`;
        return html`<div class="row ${r.dis ? "dis" : ""} ${r.cls || ""}" style=${r.h ? `height:${r.h}px` : ""}>
          <div class="ic">${r.ic || ""}</div>
          <div class="tx">${r.t}</div>
          ${r.sub ? html`<div class="ar">${r.split ? html`<i></i>` : ""}<svg width="4" height="7" viewBox="0 0 4 7"><path d="M0 0l4 3.500L0 7z" fill="#aaa"/></svg></div>` : ""}
        </div>`;
      })}
    </div>`;
  }

  render() {
    return html`
      ${this.renderTitle()}${this.renderTabs()}${this.renderRibbon()}${this.renderMain()}${this.renderStatus()}
      <div class="wm">
        <svg class="circ" width="100" height="115" viewBox="0 0 100 115"><circle cx="40" cy="52" r="42" fill="rgba(170,170,170,.14)"/><path d="M6 38l14-8 50 60-14 12z" fill="rgba(70,70,70,.28)"/><text x="36" y="30" font-size="24" font-weight="700" fill="rgba(120,120,180,.32)" font-family="Liberation Sans">PC</text><path d="M75 70L52 48l16-2z" fill="rgba(230,100,70,.22)"/></svg>
        <div class="yt"><svg width="36" height="30" viewBox="0 0 36 30"><rect width="36" height="30" rx="6" fill="rgba(240,90,80,.35)"/><path d="M14 9l10 6-10 6z" fill="#fff"/></svg><span>YouTube</span></div>
        <div class="big1">만날 수리아</div>
        <div class="big2">(PC 무료 수리, 꿀팁)</div>
      </div>
      ${this.renderPopup()}${this.renderMenu()}
      <div class="red"></div>
    `;
  }
}
